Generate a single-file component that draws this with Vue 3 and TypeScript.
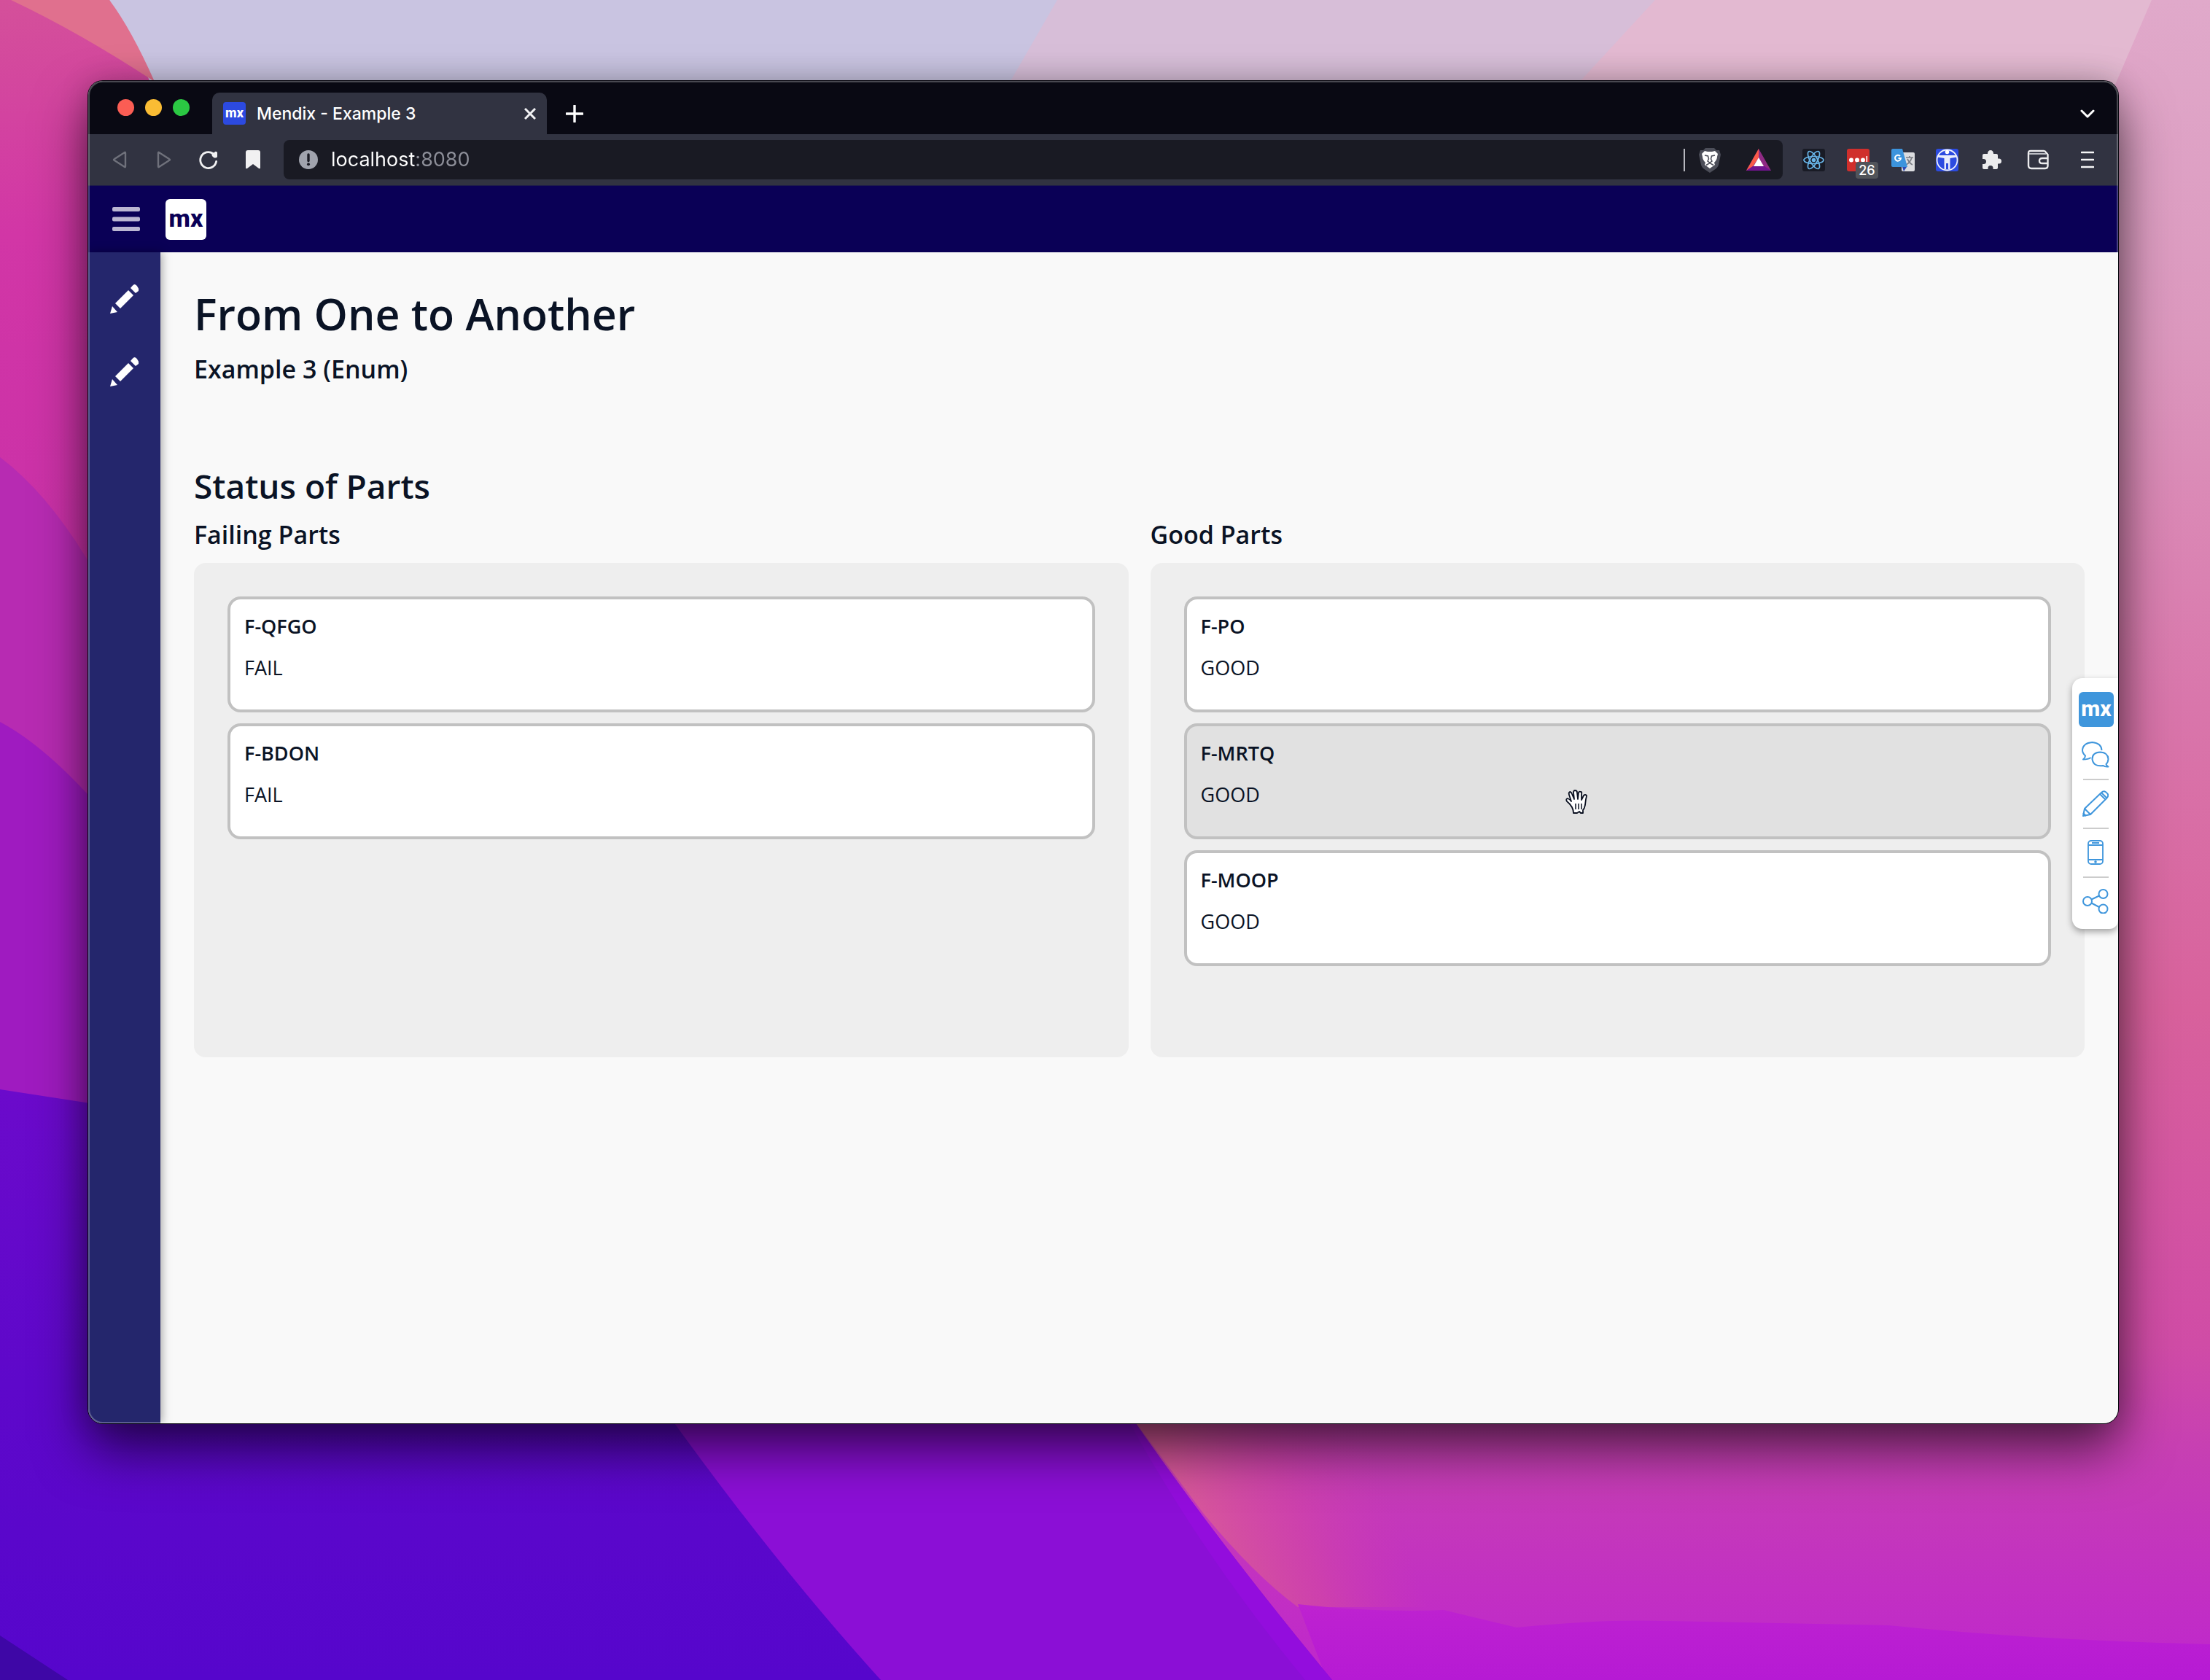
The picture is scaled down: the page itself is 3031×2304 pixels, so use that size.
<script setup lang="ts">
import { ref } from 'vue'

interface Part {
  name: string
  status: string
  active?: boolean
}

interface Column {
  title: string
  parts: Part[]
}

const address = ref('localhost:8080')

const columns: Column[] = [
  {
    title: 'Failing Parts',
    parts: [
      { name: 'F-QFGO', status: 'FAIL' },
      { name: 'F-BDON', status: 'FAIL' },
    ],
  },
  {
    title: 'Good Parts',
    parts: [
      { name: 'F-PO', status: 'GOOD' },
      { name: 'F-MRTQ', status: 'GOOD', active: true },
      { name: 'F-MOOP', status: 'GOOD' },
    ],
  },
]
</script>

<template>
  <div class="desktop">
    <svg class="wallpaper" viewBox="0 0 3031 2304" preserveAspectRatio="none" aria-hidden="true">
      <defs>
        <linearGradient id="right" x1="0" y1="0" x2="0" y2="1">
          <stop offset="0" stop-color="#e0a9ca" />
          <stop offset="0.2" stop-color="#dc98be" />
          <stop offset="0.42" stop-color="#d976ab" />
          <stop offset="0.6" stop-color="#d8619c" />
          <stop offset="0.8" stop-color="#d04ca6" />
          <stop offset="0.87" stop-color="#c63eb4" />
          <stop offset="1" stop-color="#bf26cd" />
        </linearGradient>
        <linearGradient id="left" x1="0" y1="0" x2="0" y2="1">
          <stop offset="0" stop-color="#d4509a" />
          <stop offset="0.4" stop-color="#d236a6" />
          <stop offset="1" stop-color="#c930a8" />
        </linearGradient>
        <linearGradient id="blue" x1="0" y1="0" x2="0" y2="1">
          <stop offset="0" stop-color="#6b0acb" />
          <stop offset="0.5" stop-color="#5e08ca" />
          <stop offset="1" stop-color="#5606cc" />
        </linearGradient>
        <linearGradient id="glow" gradientUnits="userSpaceOnUse" x1="1640" y1="2100" x2="1890" y2="2010">
          <stop offset="0" stop-color="#d8589a" />
          <stop offset="0.5" stop-color="#d044a8" stop-opacity="0.8" />
          <stop offset="1" stop-color="#cb3cb2" stop-opacity="0" />
        </linearGradient>
        <linearGradient id="violet" x1="0" y1="0" x2="0" y2="1">
          <stop offset="0" stop-color="#be22d0" />
          <stop offset="1" stop-color="#b61ad4" />
        </linearGradient>
      </defs>
      <rect width="3031" height="2304" fill="url(#right)" />
      <path d="M150 0H2951L2895 130H210Z" fill="#e3b9d1" />
      <path d="M150 0H2270L2150 130H210Z" fill="#d7bed8" />
      <path d="M150 0H1450L1375 130H210Z" fill="#c9c4e1" />
      <path d="M0 0H150L215 130V800H0Z" fill="url(#left)" />
      <path d="M15 0H150Q180 40 212 112Q110 45 15 0Z" fill="#e0708e" />
      <path d="M0 627Q70 680 130 785V1100H0Z" fill="#b72bb2" />
      <path d="M0 990Q60 1022 130 1100V1530H0Z" fill="#9f1bc0" />
      <path d="M0 1494L130 1514V1900H1400V2304H0Z" fill="url(#blue)" />
      <path d="M1520 1900L1650 2075Q1720 2160 1780 2204H2080V1900Z" fill="url(#glow)" />
      <path d="M1780 2200Q1890 2212 1980 2208L2080 2232Q2200 2220 2280 2223L2590 2229Q2800 2250 3031 2255V2304H1820Z" fill="url(#violet)" />
      <path d="M888 1900Q1050 2130 1208 2304H1827Q1650 2090 1522 1900Z" fill="#8b0fd6" />
      <path d="M1522 1900Q1650 2090 1827 2304H1790Q1630 2110 1522 1900Z" fill="#930ddd" />
      <path d="M0 2243L93 2304H0Z" fill="#3e07a6" />
    </svg>

    <section class="window" aria-label="Browser window">
      <header class="tabstrip">
        <div class="lights">
          <button class="light red" aria-label="Close window"></button>
          <button class="light amber" aria-label="Minimise window"></button>
          <button class="light green" aria-label="Zoom window"></button>
        </div>
        <div class="tab">
          <span class="mx favicon">mx</span>
          <span class="tab-title">Mendix - Example 3</span>
          <button class="tab-close" aria-label="Close tab">
            <svg width="16" height="16" viewBox="0 0 16 16"><path d="M1 1L15 15M15 1L1 15" stroke="#f2f2f4" stroke-width="3" /></svg>
          </button>
        </div>
        <button class="new-tab" aria-label="New tab">
          <svg width="24" height="24" viewBox="0 0 24 24"><path d="M12 1V23M1 12H23" stroke="#fff" stroke-width="3.4" stroke-linecap="round" /></svg>
        </button>
        <button class="tab-menu" aria-label="Search tabs">
          <svg width="20" height="12" viewBox="0 0 20 12"><path d="M2 2L10 10L18 2" fill="none" stroke="#fff" stroke-width="3" stroke-linecap="round" stroke-linejoin="round" /></svg>
        </button>
      </header>

      <nav class="toolbar" aria-label="Browser toolbar">
        <div class="tools">
          <button class="tool" aria-label="Back">
            <svg width="20" height="26" viewBox="0 0 20 26"><path d="M17 3Q18 2 18 4V22Q18 24 17 23L3 14Q1 13 3 12Z" fill="none" stroke="#6f717b" stroke-width="2.4" stroke-linejoin="round" /></svg>
          </button>
          <button class="tool" aria-label="Forward">
            <svg width="20" height="26" viewBox="0 0 20 26"><path d="M3 3Q2 2 2 4V22Q2 24 3 23L17 14Q19 13 17 12Z" fill="none" stroke="#6f717b" stroke-width="2.4" stroke-linejoin="round" /></svg>
          </button>
          <button class="tool" aria-label="Reload">
            <svg width="28" height="26" viewBox="0 0 28 26"><path d="M20 4.5A11 11 0 1 0 24.600 15.500" fill="none" stroke="#f1f1f2" stroke-width="2.8" stroke-linecap="round" /><path d="M18 6Q19 9 22 10.500Q25 11 26 9V3Q24 1 22.500 2.500Z" fill="#f1f1f2" /></svg>
          </button>
          <button class="tool" aria-label="Bookmark">
            <svg width="22" height="26" viewBox="0 0 22 26"><path d="M1 3Q1 0 4 0H18Q21 0 21 3V24Q21 26 19 25L11 19L3 25Q1 26 1 24Z" fill="#f1f1f2" /></svg>
          </button>
        </div>

        <div class="urlbar">
          <svg width="26" height="26" viewBox="0 0 26 26"><circle cx="13" cy="13" r="13" fill="#a0a3ad" /><path d="M13 6V14.500" stroke="#1a1b24" stroke-width="3.4" stroke-linecap="round" /><circle cx="13" cy="19.300" r="2" fill="#1a1b24" /></svg>
          <input v-model="address" class="address" type="text" aria-label="Address" spellcheck="false" />
          <span class="divider"></span>
          <button class="tool wide" aria-label="Brave Shields">
            <svg width="30" height="35" viewBox="0 0 30 35">
              <path d="M9 1H21L24 4L28 4L30 10L27 24Q26 28 21 31L15 35L9 31Q4 28 3 24L0 10L2 4L6 4Z" fill="#4c4e59" />
              <path d="M8 5L12 6H18L22 5L26 9L25 13Q25 17 21 21L22 24L15 29L8 24L9 21Q5 17 5 13L4 9Z" fill="#fff" />
              <path d="M8 11L12.500 12L13.500 16L12 19L15 21L18 19L16.500 16L17.500 12L22 11" fill="none" stroke="#4c4e59" stroke-width="1.500" />
              <path d="M10 24.500L15 21.500L20 24.500" fill="none" stroke="#4c4e59" stroke-width="1.500" />
            </svg>
          </button>
          <button class="tool wide" aria-label="Brave Rewards">
            <svg width="34" height="30" viewBox="0 0 34 30">
              <path d="M17 0L34 30H0Z" fill="#8f2a84" />
              <path d="M17 0L17 12L9 24L0 30Z" fill="#fb5a49" />
              <path d="M0 30L9 24H25L34 30Z" fill="#72148f" />
              <path d="M17 12L24 24H10Z" fill="#fff" />
            </svg>
          </button>
        </div>

        <div class="tools">
          <button class="tool" aria-label="React Developer Tools">
            <svg width="31" height="31" viewBox="0 0 31 31">
              <rect width="31" height="31" rx="3" fill="#191b25" />
              <g fill="none" stroke="#68b5e8" stroke-width="1.700">
                <ellipse cx="15.500" cy="15.500" rx="13.500" ry="5" />
                <ellipse cx="15.500" cy="15.500" rx="13.500" ry="5" transform="rotate(60 15.500 15.500)" />
                <ellipse cx="15.500" cy="15.500" rx="13.500" ry="5" transform="rotate(120 15.500 15.500)" />
              </g>
              <circle cx="15.500" cy="15.500" r="2.800" fill="#68b5e8" />
            </svg>
          </button>
          <button class="tool badged" aria-label="LastPass, 26 items">
            <svg width="31" height="31" viewBox="0 0 31 31"><rect width="31" height="31" rx="3" fill="#d02f2c" /><g fill="#fff"><circle cx="6" cy="15.500" r="3" /><circle cx="14" cy="15.500" r="3" /><circle cx="22" cy="15.500" r="3" /><rect x="26.500" y="10" width="1.600" height="11" /></g></svg>
            <span class="badge">26</span>
          </button>
          <button class="tool" aria-label="Translate">
            <svg width="32" height="31" viewBox="0 0 32 31">
              <rect x="14" y="5" width="18" height="26" rx="2" fill="#dcdde0" />
              <path d="M20 12H30M25 10V12M28 12Q26 19 20 22M22 14Q25 20 29 22" fill="none" stroke="#7b7e85" stroke-width="1.700" />
              <path d="M15 25H21L17 31Z" fill="#2c4bb8" />
              <path d="M2 0H15L22 25H2Q0 25 0 23V2Q0 0 2 0Z" fill="#3c94dd" />
              <path d="M12 10A4 4 0 1 0 13 13H9.500" fill="none" stroke="#fff" stroke-width="2" />
            </svg>
          </button>
          <button class="tool" aria-label="Accessibility">
            <svg width="31" height="31" viewBox="0 0 31 31">
              <rect width="31" height="31" rx="3" fill="#2c4be0" />
              <circle cx="15.500" cy="15.500" r="14" fill="none" stroke="#eef1fb" stroke-width="1.800" />
              <circle cx="15.500" cy="4.500" r="2.800" fill="#fff" />
              <path d="M2 9H29V11.500L19.500 13V28H17V20H14V28H11.500V13L2 11.500Z" fill="#e9edfb" />
            </svg>
          </button>
          <button class="tool" aria-label="Extensions">
            <svg width="28" height="28" viewBox="0 0 28 28"><path d="M8 6V5.500A4 4.500 0 0 1 16 5.500V6H20Q22 6 22 8V12.500H23.500A3.500 3.500 0 0 1 23.500 19.500H22V25Q22 27 20 27H15.500V25.500A3.500 3.500 0 0 0 8.500 25.500V27H3Q1 27 1 25V20H2.500A3.500 3.500 0 0 0 2.500 13H1V8Q1 6 3 6Z" fill="#ececee" /></svg>
          </button>
          <button class="tool wide" aria-label="Wallet">
            <svg width="31" height="28" viewBox="0 0 31 28"><g fill="none" stroke="#ececee" stroke-width="2.400" stroke-linejoin="round"><path d="M5 2H23Q25 2 26 4L28.500 7V22Q28.500 26 25 26H6Q2 26 2 22V5Q2 2 5 2Z" /><path d="M29 12H21Q17 12 17 15.500Q17 19 21 19H29" /></g><path d="M3 6H26" stroke="#b9bbc2" stroke-width="2.200" /></svg>
          </button>
          <button class="tool wide" aria-label="Browser menu">
            <svg width="18" height="26" viewBox="0 0 18 26"><path d="M1 3H17M1 13H17M1 23H17" stroke="#f6f6f7" stroke-width="2.600" stroke-linecap="round" /></svg>
          </button>
        </div>
      </nav>

      <div class="topbar">
        <button class="burger" aria-label="Toggle menu">
          <svg width="38" height="33" viewBox="0 0 38 33"><g fill="#bbb6d2"><rect width="38" height="6" rx="2" /><rect y="13.500" width="38" height="6" rx="2" /><rect y="27" width="38" height="6" rx="2" /></g></svg>
        </button>
        <a class="mx logo" href="#" aria-label="Mendix home">mx</a>
      </div>

      <div class="body">
        <nav class="sidebar" aria-label="Pages">
          <a v-for="n in 2" :key="n" href="#" class="side-link" :aria-label="'Example page ' + n">
            <svg width="40" height="40" viewBox="0 0 40 40"><g fill="#fff"><path d="M0 40L3 30L10 38Z" /><path d="M7 26L25 8L32 15L14 33Z" /><path d="M28 5Q31 1 33 0Q36 0 38 4Q40 6 39 9L35 12Z" /></g></svg>
          </a>
        </nav>

        <main class="page">
          <h1>From One to Another</h1>
          <p class="subtitle">Example 3 (Enum)</p>
          <h2>Status of Parts</h2>
          <div class="columns">
            <section v-for="column in columns" :key="column.title" class="column">
              <h3>{{ column.title }}</h3>
              <ul class="panel">
                <li v-for="part in column.parts" :key="part.name" class="card" :class="{ active: part.active }" draggable="true">
                  <strong>{{ part.name }}</strong>
                  <span>{{ part.status }}</span>
                  <svg v-if="part.active" class="hand" width="30" height="34" viewBox="0 0 30 34" aria-hidden="true">
                    <path d="M9 24Q6 19 2 16Q0 13 3 12Q6 13 8 16L5 7Q4 4 6 3Q8 3 9 6L12 13L11 4Q11 1 13 1Q16 1 16 4L17 13L18 4Q19 2 21 3Q23 3 22 6L22 14L25 8Q27 6 29 8Q29 10 28 13L27 21Q26 26 24 28V32H21L19 30L16 32H11Q11 28 9 24Z" fill="#fff" stroke="#0a1020" stroke-width="1.800" stroke-linejoin="round" />
                    <path d="M14 19V27M18 19V27M22 19V27" stroke="#0a1020" stroke-width="1.500" />
                  </svg>
                </li>
              </ul>
            </section>
          </div>
        </main>

        <aside class="widget" aria-label="Mendix tools">
          <button class="mx widget-logo" aria-label="Mendix">mx</button>
          <div class="widget-tools">
            <button class="widget-tool" aria-label="Feedback">
              <svg width="38" height="36" viewBox="0 0 38 36"><g fill="none" stroke="#3f96dc" stroke-width="2" stroke-linejoin="round"><path d="M12.500 22Q9 24.500 2 24.500Q5 22 5 19.500Q1 16 1 11.500Q2 2 14.500 1Q27 2 27.500 12" /><path d="M14.500 24Q14.500 15 25.500 14.500Q36 15 36.500 24Q36 29 33.500 31Q34 33 36.500 34.500Q32 35 29.500 33Q16 35 14.500 24Z" /></g></svg>
            </button>
            <button class="widget-tool" aria-label="Edit">
              <svg width="36" height="36" viewBox="0 0 36 36"><g fill="none" stroke="#3f96dc" stroke-width="2" stroke-linejoin="round"><path d="M1 35L3 25L26 3Q30 -1 34 4Q37 7 33 11L11 33Z" /><path d="M3 25L11 33M24 5L31 12M26 3L33 10M1 31L5 35" /></g></svg>
            </button>
            <button class="widget-tool" aria-label="View on device">
              <svg width="22" height="34" viewBox="0 0 22 34"><g fill="none" stroke="#3f96dc" stroke-width="1.800"><rect x="1" y="1" width="20" height="32" rx="4" /><path d="M1 7H21M1 27H21M6 4H16" /></g><circle cx="11" cy="30" r="1.800" fill="#3f96dc" /></svg>
            </button>
            <button class="widget-tool" aria-label="Share">
              <svg width="36" height="34" viewBox="0 0 36 34"><g fill="none" stroke="#3f96dc" stroke-width="2"><circle cx="7" cy="17" r="6" /><circle cx="28.500" cy="7" r="6" /><circle cx="28.500" cy="27.500" r="6" /><path d="M12.500 14.500L23 9.500M12.500 19.500L23 25" /></g></svg>
            </button>
          </div>
        </aside>
      </div>
    </section>
  </div>
</template>

<style>
body {
  margin: 0;
}
</style>

<style scoped>
* {
  box-sizing: border-box;
}

button {
  margin: 0;
  padding: 0;
  border: 0;
  background: none;
  display: flex;
  align-items: center;
  justify-content: center;
  cursor: pointer;
}

svg {
  display: block;
  flex: none;
}

.desktop {
  position: relative;
  min-height: 100vh;
  display: flex;
  padding: 111px 126px 352px 121px;
  overflow: hidden;
  font-family: "Open Sans", sans-serif;
}

.wallpaper {
  position: absolute;
  inset: 0;
  width: 100%;
  height: 100%;
}

.window {
  position: relative;
  flex: 1;
  min-width: 0;
  display: flex;
  flex-direction: column;
  border-radius: 20px;
  overflow: hidden;
  background: #f9f9f9;
  box-shadow: 0 0 0 1px #08080f, 0 36px 72px rgba(0, 0, 0, 0.6), 0 0 40px rgba(0, 0, 0, 0.2);
}

.window::after {
  content: "";
  position: absolute;
  inset: 0;
  border: 2px solid rgba(255, 255, 255, 0.26);
  border-radius: 20px;
  pointer-events: none;
}

.tabstrip {
  display: flex;
  align-items: flex-end;
  height: 73px;
  padding: 0 9px 0 40px;
  background: #090913;
}

.lights {
  display: flex;
  align-self: center;
  gap: 15px;
  margin-right: 31px;
}

.light {
  width: 23px;
  height: 23px;
  border-radius: 50%;
}

.red {
  background: #fb5d54;
}

.amber {
  background: #fabc34;
}

.green {
  background: #2bc843;
}

.tab {
  display: flex;
  align-items: center;
  width: 459px;
  height: 57px;
  padding: 0 15px;
  gap: 15px;
  border-radius: 10px 10px 0 0;
  background: #313341;
}

.mx {
  display: flex;
  align-items: center;
  justify-content: center;
  flex: none;
  font-family: "Roboto", sans-serif;
  font-weight: 800;
  text-decoration: none;
}

.favicon {
  width: 31px;
  height: 31px;
  padding-bottom: 2px;
  border-radius: 4px;
  background: #2c4ae0;
  color: #fff;
  font-size: 18px;
  line-height: 20px;
}

.tab-title {
  flex: 1;
  font: 500 23px/32px "Inter", sans-serif;
  color: #fff;
  white-space: nowrap;
}

.new-tab {
  width: 76px;
  height: 57px;
}

.tab-menu {
  width: 67px;
  height: 57px;
  margin-left: auto;
}

.toolbar {
  display: flex;
  align-items: center;
  height: 71px;
  padding: 0 9px 0 12px;
  gap: 12px;
  border-bottom: 1px solid #1d1c4a;
  background: #313341;
}

.tools {
  display: flex;
}

.tool {
  width: 61px;
  height: 54px;
}

.wide {
  width: 67px;
}

.badged {
  position: relative;
}

.badge {
  position: absolute;
  left: 27px;
  top: 30px;
  width: 31px;
  height: 23px;
  border-radius: 4px;
  background: #51545a;
  color: #fff;
  font: 500 18px/24px "Inter", sans-serif;
  text-align: center;
}

.urlbar {
  flex: 1;
  display: flex;
  align-items: center;
  height: 54px;
  padding-left: 21px;
  border-radius: 8px;
  background: #191a23;
}

.address {
  flex: 1;
  min-width: 0;
  height: 40px;
  margin-left: 18px;
  padding: 0;
  border: 0;
  outline: 0;
  background: linear-gradient(90deg, #fff 115px, #8d8f99 115px);
  background-clip: text;
  color: transparent;
  font: 400 27px/40px "Inter", sans-serif;
}

.divider {
  width: 2px;
  height: 31px;
  background: #b6b7be;
}

.topbar {
  display: flex;
  align-items: center;
  height: 91px;
  padding: 0 33px;
  gap: 35px;
  background: #0a0056;
}

.logo {
  width: 56px;
  height: 56px;
  padding-bottom: 4px;
  border-radius: 6px;
  background: #fff;
  color: #0a0056;
  font-size: 34px;
  line-height: 40px;
}

.body {
  position: relative;
  flex: 1;
  display: flex;
}

.sidebar {
  position: relative;
  flex: none;
  width: 99px;
  padding-top: 14px;
  background: #24266c;
  box-shadow: 2px 0 12px rgba(0, 0, 0, 0.35);
}

.side-link {
  display: flex;
  align-items: center;
  justify-content: center;
  height: 100px;
}

.page {
  flex: 1;
  min-width: 0;
  padding: 48px 46px;
  color: #0a1325;
}

h1,
h2,
h3,
p,
ul {
  margin: 0;
  padding: 0;
  font-weight: 600;
}

h1 {
  font-size: 59px;
  line-height: 72px;
}

.subtitle,
h3 {
  font-size: 34px;
  line-height: 48px;
}

.subtitle {
  margin-top: 16px;
}

h2 {
  margin-top: 106px;
  font-size: 46px;
  line-height: 60px;
}

.columns {
  display: flex;
  gap: 30px;
  margin-top: 13px;
}

.column {
  flex: 1;
}

.panel {
  display: flex;
  flex-direction: column;
  gap: 15px;
  min-height: 678px;
  margin-top: 15px;
  padding: 46px;
  border-radius: 16px;
  background: #eee;
  list-style: none;
}

.card {
  position: relative;
  display: flex;
  flex-direction: column;
  gap: 17px;
  padding: 17px 19px 37px;
  border: 4px solid #c1c1c1;
  border-radius: 18px;
  background: #fff;
  font-size: 27px;
  line-height: 40px;
  font-weight: 400;
}

.card strong {
  font-weight: 600;
}

.active {
  background: #e1e1e1;
}

.hand {
  position: absolute;
  left: 44%;
  top: 87px;
}

.widget {
  position: absolute;
  right: 0;
  top: 584px;
  width: 63px;
  height: 344px;
  padding: 19px 6px 0 9px;
  border-radius: 14px 0 12px 14px;
  background: #fff;
  box-shadow: 0 4px 10px rgba(0, 0, 0, 0.35);
}

.widget-logo {
  width: 48px;
  height: 48px;
  padding-bottom: 2px;
  border-radius: 6px;
  background: #3f96dc;
  color: #fff;
  font-size: 30px;
  line-height: 36px;
}

.widget-tools {
  margin-top: 4px;
}

.widget-tool {
  width: 46px;
  height: 67px;
}

.widget-tool + .widget-tool {
  background: linear-gradient(#ccc, #ccc) center top / 35px 2px no-repeat;
}
</style>
